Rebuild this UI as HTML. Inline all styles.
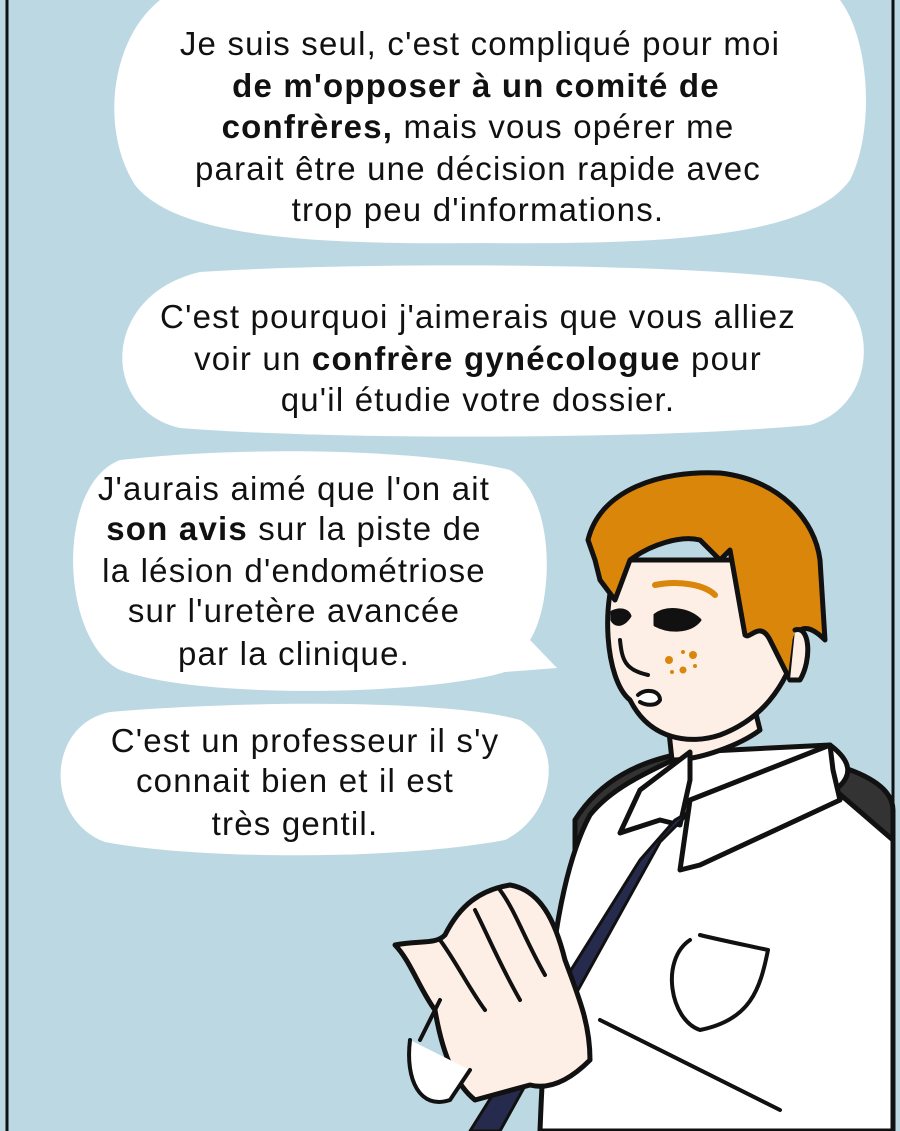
<!DOCTYPE html>
<html><head><meta charset="utf-8"><style>
html,body{margin:0;padding:0;background:#bcd9e3}
svg{display:block}
text{font-family:"Liberation Sans",sans-serif;font-size:33px;letter-spacing:1.2px;fill:#111;text-anchor:middle}
.b{font-weight:bold}
</style></head><body>
<svg width="900" height="1131" viewBox="0 0 900 1131" xmlns="http://www.w3.org/2000/svg">
<rect width="900" height="1131" fill="#bcd9e3"/>
<line x1="7" y1="0" x2="7" y2="1131" stroke="#111" stroke-width="3"/>
<line x1="893" y1="0" x2="893" y2="1131" stroke="#111" stroke-width="3"/>
<!-- bubbles -->
<path d="M160 0 H840 C870 40 875 130 850 180 C810 235 680 245 480 243 C300 245 175 235 135 185 C100 130 110 40 160 0Z" fill="#fff"/>
<path d="M200 272 C350 262 700 262 820 282 C880 305 880 405 810 425 C650 440 330 440 180 428 C100 410 100 295 200 272Z" fill="#fff"/>
<path d="M120 460 C250 445 430 450 510 470 C555 495 555 600 530 640 L557 668 L505 672 C430 695 200 700 120 670 C60 640 55 485 120 460Z" fill="#fff"/>
<path d="M110 712 C250 700 450 700 520 720 C565 745 555 815 505 840 C400 860 200 860 105 842 C45 820 45 725 110 712Z" fill="#fff"/>
<text x="480" y="55">Je suis seul, c'est compliqué pour moi</text>
<text x="476" y="97" class="b">de m'opposer à un comité de</text>
<text x="478" y="138"><tspan class="b">confrères,</tspan> mais vous opérer me</text>
<text x="478" y="180">parait être une décision rapide avec</text>
<text x="478" y="221">trop peu d'informations.</text>
<text x="478" y="328">C'est pourquoi j'aimerais que vous alliez</text>
<text x="478" y="370">voir un <tspan class="b">confrère gynécologue</tspan> pour</text>
<text x="478" y="411">qu'il étudie votre dossier.</text>
<text x="294" y="500">J'aurais aimé que l'on ait</text>
<text x="294" y="540"><tspan class="b">son avis</tspan> sur la piste de</text>
<text x="294" y="582">la lésion d'endométriose</text>
<text x="294" y="622">sur l'uretère avancée</text>
<text x="294" y="665">par la clinique.</text>
<text x="305" y="752">C'est un professeur il s'y</text>
<text x="295" y="792">connait bien et il est</text>
<text x="295" y="835">très gentil.</text>
<!-- character -->
<g stroke="#111" stroke-width="5" stroke-linejoin="round" stroke-linecap="round">
<path d="M575 820 C600 780 640 760 690 752 L835 765 C870 775 893 790 893 810 L893 900 L575 900Z" fill="#333"/>
<path d="M540 1131 C545 1000 555 880 590 815 C610 790 640 775 690 752 L830 745 C850 760 855 775 835 790 L893 840 L893 1131Z" fill="#fff"/>
<path d="M665 695 L672 760 C700 760 740 745 760 730 L750 690Z" fill="#fdefe5"/>
<path d="M690 752 L640 790 L620 833 L660 820 L680 825 L690 780Z" fill="#fff"/>
<path d="M692 810 L660 842 L500 1131 L470 1131 L640 860 L675 820Z" fill="#262b4e" stroke-width="3"/>
<path d="M830 745 L690 800 L680 870 L700 865 L840 800 L833 770Z" fill="#fff"/>
<path d="M700 935 C720 940 745 945 768 950 C760 990 750 1020 700 1030 C670 1020 660 960 690 940" fill="none" stroke-width="4"/>
<path d="M600 1020 L780 1110" fill="none" stroke-width="4"/>
<path d="M620 560 C600 600 605 680 630 700 C650 740 690 745 720 735 C760 720 785 690 800 640 L810 560 Z" fill="#fdefe5"/>
<path d="M588 540 C600 490 660 470 720 473 C780 480 815 520 820 560 L825 640 C815 630 800 620 795 640 L790 680 L770 640 C760 620 750 640 745 635 L730 550 L720 560 L700 540 C680 535 650 545 630 560 L615 600 L600 580 L595 560Z" fill="#d9860a"/>
<path d="M795 630 C810 625 812 660 800 680 L790 680" fill="#fdefe5"/>
<path d="M655 615 C668 605 690 610 700 620 C690 633 668 632 655 625Z" fill="#111" stroke-width="3"/>
<path d="M612 612 C620 608 628 610 630 616 C622 628 614 625 612 620Z" fill="#111" stroke-width="3"/>
<path d="M655 585 C680 580 705 585 715 595" fill="none" stroke="#d9860a" stroke-width="6"/>
<path d="M638 695 C645 688 660 690 660 700 C656 707 645 705 640 702" fill="#fff" stroke-width="4"/>
<path d="M620 640 C622 660 625 670 648 675" fill="none" stroke-width="4"/>
<!-- hands -->
<path d="M395 945 C420 940 435 945 445 935 C460 905 480 890 510 885 C540 890 555 920 565 960 C580 1000 590 1025 590 1060 C570 1080 550 1090 530 1085 L475 1100 C450 1080 440 1040 435 1010 C420 990 410 960 395 945Z" fill="#fdefe5"/>
<path d="M440 940 C455 960 470 990 485 1010 M475 910 C490 940 500 965 520 1000 M500 890 C515 910 525 940 545 975 M440 1000 L420 1040" fill="none" stroke-width="4"/>
<path d="M410 1040 C405 1080 420 1110 450 1100 L470 1070" fill="#fff" stroke-width="4"/>
</g>
<g fill="#d9860a"><circle cx="669" cy="660" r="4"/><circle cx="693" cy="655" r="4"/><circle cx="683" cy="670" r="3.5"/><circle cx="683" cy="652" r="2"/><circle cx="695" cy="666" r="2"/><circle cx="672" cy="672" r="2"/></g>
</svg>
</body></html>
